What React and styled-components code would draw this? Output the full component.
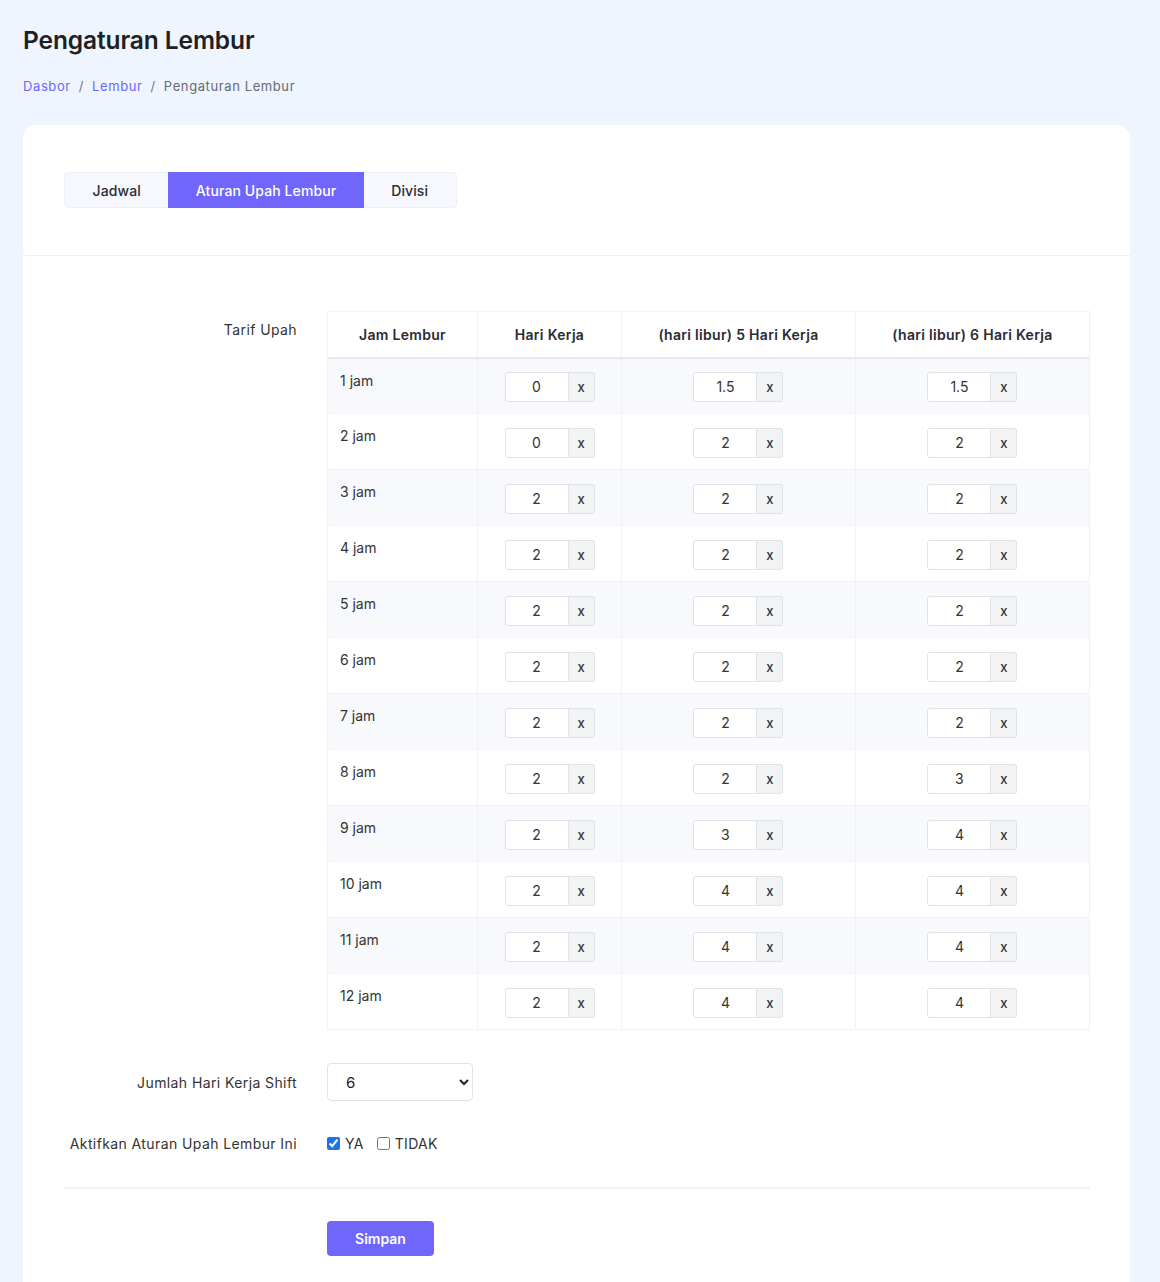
import React, { useState } from 'react'
import styled, { createGlobalStyle } from 'styled-components'

const primary = '#7166fb'

const GlobalStyle = createGlobalStyle`
    * { box-sizing: border-box; }
    body {
        margin: 0;
        background: #eef5fe;
        font-family: Inter, "Noto Sans", sans-serif;
        color: #333;
    }
`

const rates = [
    ['1 jam', '0', '1.5', '1.5'],
    ['2 jam', '0', '2', '2'],
    ['3 jam', '2', '2', '2'],
    ['4 jam', '2', '2', '2'],
    ['5 jam', '2', '2', '2'],
    ['6 jam', '2', '2', '2'],
    ['7 jam', '2', '2', '2'],
    ['8 jam', '2', '2', '3'],
    ['9 jam', '2', '3', '4'],
    ['10 jam', '2', '4', '4'],
    ['11 jam', '2', '4', '4'],
    ['12 jam', '2', '4', '4'],
]

const tabs = ['Jadwal', 'Aturan Upah Lembur', 'Divisi']

export default function App() {
    const [active, setActive] = useState(1)
    const [enabled, setEnabled] = useState(true)

    return (
        <Page>
            <GlobalStyle />
            <Title>Pengaturan Lembur</Title>
            <Breadcrumb>
                <a>Dasbor</a>
                <span className="sep">/</span>
                <a>Lembur</a>
                <span className="sep">/</span>
                <span>Pengaturan Lembur</span>
            </Breadcrumb>

            <Card>
                <CardHeader>
                    <Tabs>
                        {tabs.map((t, i) => (
                            <Tab key={t} $active={i === active} onClick={() => setActive(i)}>{t}</Tab>
                        ))}
                    </Tabs>
                </CardHeader>

                <CardBody>
                    <FormRow>
                        <Label $top>Tarif Upah</Label>
                        <RateTable>
                            <thead>
                                <tr>
                                    <th style={{ width: 150 }}>Jam Lembur</th>
                                    <th style={{ width: 144 }}>Hari Kerja</th>
                                    <th>(hari libur) 5 Hari Kerja</th>
                                    <th>(hari libur) 6 Hari Kerja</th>
                                </tr>
                            </thead>
                            <tbody>
                                {rates.map(([hour, ...vals]) => (
                                    <tr key={hour}>
                                        <td className="hour">{hour}</td>
                                        {vals.map((v, i) => (
                                            <td key={i}>
                                                <InputGroup>
                                                    <NumInput defaultValue={v} />
                                                    <Addon>x</Addon>
                                                </InputGroup>
                                            </td>
                                        ))}
                                    </tr>
                                ))}
                            </tbody>
                        </RateTable>
                    </FormRow>

                    <FormRow $mt={33} $center>
                        <Label>Jumlah Hari Kerja Shift</Label>
                        <Select defaultValue="6">
                            <option value="5">5</option>
                            <option value="6">6</option>
                        </Select>
                    </FormRow>

                    <FormRow $mt={34} $center>
                        <Label>Aktifkan Aturan Upah Lembur Ini</Label>
                        <Checks>
                            <label>
                                <input type="checkbox" checked={enabled} onChange={() => setEnabled(true)} />
                                YA
                            </label>
                            <label>
                                <input type="checkbox" checked={!enabled} onChange={() => setEnabled(false)} />
                                TIDAK
                            </label>
                        </Checks>
                    </FormRow>

                    <Divider />

                    <FormRow $mt={0}>
                        <span />
                        <div>
                            <SaveButton>Simpan</SaveButton>
                        </div>
                    </FormRow>
                </CardBody>
            </Card>
        </Page>
    )
}

const Page = styled.div`
    padding: 25px 30px 0 23px;
    min-height: 1282px;
`

const Title = styled.h1`
    margin: 0;
    font-size: 24.5px;
    line-height: 30px;
    font-weight: 600;
    color: #1f1f24;
    letter-spacing: -0.1px;
`

const Breadcrumb = styled.div`
    margin-top: 23px;
    font-size: 13px;
    line-height: 16px;
    letter-spacing: 0.6px;
    color: #666a72;
    display: flex;
    gap: 8px;
    a {
        color: ${primary};
        cursor: pointer;
    }
    .sep {
        color: #777;
    }
`

const Card = styled.div`
    margin-top: 31px;
    background: #fff;
    border-radius: 14px 14px 0 0;
    min-height: 1160px;
`

const CardHeader = styled.div`
    padding: 47px 41px;
    border-bottom: 1px solid #eef2f8;
`

const Tabs = styled.div`
    display: inline-flex;
    background: #f7f8fe;
    border: 1px solid #eef0f8;
    border-radius: 4px;
    height: 36px;
`

const Tab = styled.button`
    border: none;
    background: ${p => (p.$active ? primary : 'transparent')};
    color: ${p => (p.$active ? '#fff' : '#2b2b33')};
    font-family: inherit;
    font-size: 14px;
    font-weight: 500;
    letter-spacing: 0.1px;
    padding: 0 27.5px;
    cursor: pointer;
    margin: -1px 0;
`

const CardBody = styled.div`
    padding: 55px 40px 40px 41px;
`

const FormRow = styled.div`
    display: grid;
    grid-template-columns: 233px 1fr;
    column-gap: 30px;
    align-items: ${p => (p.$center ? 'center' : 'start')};
    margin-top: ${p => (p.$mt ?? 0)}px;
`

const Label = styled.div`
    text-align: right;
    font-size: 14px;
    letter-spacing: 0.4px;
    color: #333;
    padding-top: ${p => (p.$top ? '10px' : '0')};
`

const RateTable = styled.table`
    width: 763px;
    border-collapse: collapse;
    border: 1px solid #f0f2f6;
    th {
        height: 46px;
        font-size: 14px;
        font-weight: 600;
        color: #2b2b33;
        letter-spacing: 0.3px;
        border-left: 1px solid #f0f2f6;
        border-bottom: 2px solid #e6e9ef;
        text-align: center;
        padding: 0 8px;
    }
    td {
        height: 56px;
        border-left: 1px solid #f0f2f6;
        border-top: 1px solid #f0f2f6;
        text-align: center;
        vertical-align: middle;
        padding: 0;
    }
    td.hour {
        text-align: left;
        vertical-align: top;
        padding: 13px 12px 0;
        font-size: 14px;
        color: #333;
    }
    tbody tr:nth-child(odd) {
        background: #f8f9fc;
    }
`

const InputGroup = styled.div`
    display: inline-flex;
    height: 30px;
    margin-top: 2px;
`

const NumInput = styled.input`
    width: 64px;
    height: 30px;
    border: 1px solid #dfe2e7;
    border-radius: 3px 0 0 3px;
    text-align: center;
    font-family: inherit;
    font-size: 14px;
    color: #333;
    background: #fff;
    outline: none;
`

const Addon = styled.span`
    width: 26px;
    display: flex;
    align-items: center;
    justify-content: center;
    background: #f2f3f5;
    border: 1px solid #dfe2e7;
    border-left: none;
    border-radius: 0 3px 3px 0;
    font-size: 13px;
    font-weight: 500;
    color: #333;
`

const Select = styled.select`
    width: 146px;
    height: 38px;
    border: 1px solid #dfe2e7;
    border-radius: 4px;
    background: #fff;
    font-family: inherit;
    font-size: 15px;
    color: #222;
    padding: 0 10px 0 14px;
`

const Checks = styled.div`
    display: flex;
    gap: 13px;
    font-size: 14px;
    letter-spacing: 0.3px;
    color: #333;
    label {
        display: inline-flex;
        align-items: center;
        gap: 5px;
    }
    input {
        margin: 0;
        width: 13px;
        height: 13px;
        accent-color: #1a73e8;
    }
`

const Divider = styled.hr`
    border: none;
    border-top: 2px solid #f0f1f4;
    margin: 35px 0 32px;
`

const SaveButton = styled.button`
    width: 107px;
    height: 35px;
    background: ${primary};
    color: #fff;
    border: none;
    border-radius: 4px;
    font-family: inherit;
    font-size: 14px;
    font-weight: 600;
    cursor: pointer;
`
